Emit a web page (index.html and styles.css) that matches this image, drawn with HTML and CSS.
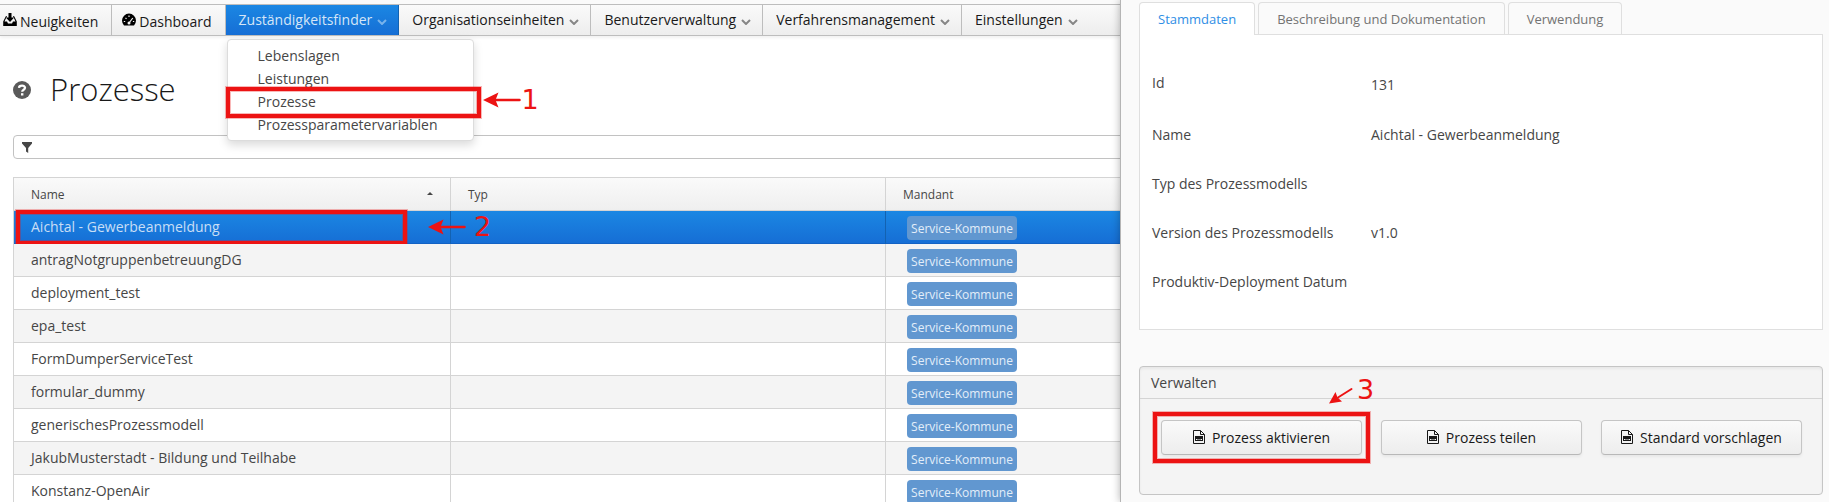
FILE: index.html
```html
<!DOCTYPE html>
<html lang="de">
<head>
<meta charset="utf-8">
<title>Prozesse</title>
<link rel="stylesheet" href="styles.css">
</head>
<body>
<svg class="defs" aria-hidden="true">
  <symbol id="chevron" viewBox="0 0 10 6"><path d="M1 1l4 4 4-4" fill="none" stroke="currentColor" stroke-width="2"/></symbol>
  <symbol id="file" viewBox="0 0 12 14"><path d="M.5.5h7l4 4v9H.5z M7.5.5v4h4" fill="none" stroke="currentColor"/><path d="M2 6h8v5H2z" fill="currentColor"/><path d="M3 9.500h1.500M5.500 9.500h1M7.500 9.500h1.500" stroke="#f8f8f8"/></symbol>
  <symbol id="arrow" viewBox="0 0 38 16"><path d="M12 8h24.500" stroke="currentColor" stroke-width="2.500" stroke-linecap="round"/><path d="M0 8L15.500.5 12.500 8l3 7.500z" fill="currentColor"/></symbol>
</svg>
<div class="app">
  <main class="main">
    <nav class="menubar">
      <a class="menu-item menu-link" href="#"><svg class="icon-inbox" viewBox="0 0 14 14"><path d="M5.500 0h3v4.500h2.700L7 9 2.800 4.500h2.700z"/><path d="M3 3L.2 8.500V13h13.600V8.500L11 3h-1l2.500 5.500H10L9 10.500H5L4 8.500H1.500L4 3z"/></svg>Neuigkeiten</a>
      <a class="menu-item menu-link dashboard" href="#"><svg class="icon-gauge" viewBox="0 0 14 12"><path d="M2 11.500A7 7 0 1 1 12 11.500z"/><path d="M7 9l3.800-5M1.800 7.500h1.400M3.500 3.800l1 1M7 1.600V3M10.900 7.500h1.300" stroke="#f4f4f4" stroke-width="1.200" fill="none"/><circle cx="7" cy="9" r="1.500" fill="#f4f4f4"/></svg>Dashboard</a>
      <div class="menu-group">
        <button class="menu-item active" type="button">Zuständigkeitsfinder<svg class="chevron"><use href="#chevron"/></svg></button>
        <ul class="dropdown">
          <li><a href="#">Lebenslagen</a></li>
          <li><a href="#">Leistungen</a></li>
          <li class="marked"><a href="#">Prozesse</a>
            <span class="mark mark-menu"></span>
            <span class="step step-one"><svg class="arrow"><use href="#arrow"/></svg>1</span></li>
          <li><a href="#">Prozessparametervariablen</a></li>
        </ul>
      </div>
      <button class="menu-item" type="button">Organisationseinheiten<svg class="chevron"><use href="#chevron"/></svg></button>
      <button class="menu-item" type="button">Benutzerverwaltung<svg class="chevron"><use href="#chevron"/></svg></button>
      <button class="menu-item" type="button">Verfahrensmanagement<svg class="chevron"><use href="#chevron"/></svg></button>
      <button class="menu-item last" type="button">Einstellungen<svg class="chevron"><use href="#chevron"/></svg></button>
    </nav>
    <header class="title">
      <svg class="help" viewBox="0 0 18 18"><circle cx="9" cy="9" r="9" fill="#5a5a5a"/><path d="M6 6.800C6.200 3.800 12 3.800 12 6.800 12 8.800 9.200 8.600 9.200 10.800" fill="none" stroke="#fff" stroke-width="2.300"/><path d="M8 12.200h2.400v2.300H8z" fill="#fff"/></svg>
      <h1>Prozesse</h1>
    </header>
    <label class="filter">
      <svg class="funnel" viewBox="0 0 10 11"><path d="M0 0h10v1.500L6.200 6v5L4 9.500V6L0 1.500z"/></svg>
      <input type="text" aria-label="Filter">
    </label>
    <table class="grid">
      <colgroup><col class="col-name"><col class="col-typ"><col></colgroup>
      <thead><tr><th><span class="sorted">Name<svg class="sort" viewBox="0 0 6 3"><path d="M0 3l3-3 3 3z"/></svg></span></th><th>Typ</th><th>Mandant</th></tr></thead>
      <tbody>
        <tr class="selected"><td>Aichtal - Gewerbeanmeldung<span class="mark mark-row"></span></td><td><span class="step step-two"><svg class="arrow"><use href="#arrow"/></svg>2</span></td><td><span class="tag">Service-Kommune</span></td></tr>
        <tr><td>antragNotgruppenbetreuungDG</td><td></td><td><span class="tag">Service-Kommune</span></td></tr>
        <tr><td>deployment_test</td><td></td><td><span class="tag">Service-Kommune</span></td></tr>
        <tr><td>epa_test</td><td></td><td><span class="tag">Service-Kommune</span></td></tr>
        <tr><td>FormDumperServiceTest</td><td></td><td><span class="tag">Service-Kommune</span></td></tr>
        <tr><td>formular_dummy</td><td></td><td><span class="tag">Service-Kommune</span></td></tr>
        <tr><td>generischesProzessmodell</td><td></td><td><span class="tag">Service-Kommune</span></td></tr>
        <tr><td>JakubMusterstadt - Bildung und Teilhabe</td><td></td><td><span class="tag">Service-Kommune</span></td></tr>
        <tr><td>Konstanz-OpenAir</td><td></td><td><span class="tag">Service-Kommune</span></td></tr>
      </tbody>
    </table>
  </main>
  <aside class="detail">
    <div class="tabs" role="tablist">
      <button class="tab current" type="button" role="tab" aria-selected="true">Stammdaten</button>
      <button class="tab" type="button" role="tab">Beschreibung und Dokumentation</button>
      <button class="tab" type="button" role="tab">Verwendung</button>
    </div>
    <dl class="sheet">
      <dt>Id</dt><dd class="id-value">131</dd>
      <dt>Name</dt><dd>Aichtal - Gewerbeanmeldung</dd>
      <dt>Typ des Prozessmodells</dt><dd></dd>
      <dt>Version des Prozessmodells</dt><dd>v1.0</dd>
      <dt>Produktiv-Deployment Datum</dt><dd></dd>
    </dl>
    <section class="manage">
      <h2>Verwalten</h2>
      <div class="actions">
        <div class="action">
          <button class="button" type="button"><svg class="file"><use href="#file"/></svg>Prozess aktivieren</button>
          <span class="mark mark-button"></span>
          <span class="step step-three"><svg class="arrow-down" viewBox="0 0 24 18"><path d="M22.500 2L9 10.500" stroke="currentColor" stroke-width="2" stroke-linecap="round"/><path d="M0 16.500L6.500 5l2 5.500 4.500 4z" fill="currentColor"/></svg>3</span>
        </div>
        <div class="action"><button class="button" type="button"><svg class="file"><use href="#file"/></svg>Prozess teilen</button></div>
        <div class="action"><button class="button" type="button"><svg class="file"><use href="#file"/></svg>Standard vorschlagen</button></div>
      </div>
    </section>
  </aside>
</div>
</body>
</html>
```

FILE: styles.css
```css
* { box-sizing: border-box; }
body { margin: 0; font-family: "Open Sans", sans-serif; font-size: 14px; line-height: 20px; color: #464646; background: #fff; }
button, input { font: inherit; color: inherit; }
a { color: inherit; text-decoration: none; }
.defs { display: none; }
.app { display: grid; grid-template-columns: minmax(0, 1120fr) minmax(0, 709fr); height: 100vh; overflow: hidden; }
.main { overflow: hidden; }

.menubar { display: flex; height: 32px; margin-top: 4px; border-top: 1px solid #bdbdbd; border-bottom: 1px solid #bdbdbd; background: linear-gradient(#fafafa, #ededed); box-shadow: 0 -4px 0 #fafafa, 0 2px 3px rgba(0, 0, 0, .06); color: #191919; }
.menu-item { display: flex; align-items: center; height: 30px; padding: 0 11px 0 13px; border: 0; border-right: 1px solid #bdbdbd; background: none; white-space: nowrap; }
.menu-link { padding: 4px 13px 0 3px; gap: 3px; }
.menu-link.dashboard { padding-left: 10px; }
.menu-item.last { border-right: 0; }
.menu-item.active { border-right-color: #1362b1; background: linear-gradient(#1b87e3, #166ed5); color: #d5e6f7; }
.chevron { width: 10px; height: 6px; margin: 3px 0 0 5px; color: #868686; }
.active .chevron { color: #78b3ec; }
.icon-inbox, .icon-gauge { width: 14px; height: 14px; margin-bottom: 4px; }
.menu-group { position: relative; }
.dropdown { position: absolute; z-index: 2; top: 34px; left: 1px; width: 247px; margin: 0; padding: 4px 0; border: 1px solid #dcdcdc; border-radius: 4px; background: #fff; box-shadow: 0 4px 10px rgba(0, 0, 0, .15); list-style: none; color: #464646; }
.dropdown li { position: relative; height: 23px; padding-left: 30px; line-height: 23px; white-space: nowrap; }
.dropdown li.marked { z-index: 1; }

.mark { position: absolute; border: 4px solid #ec1313; box-shadow: 0 0 0 1px rgba(236, 19, 19, .3), inset 0 0 0 1px rgba(236, 19, 19, .3); pointer-events: none; }
.mark-menu { top: -3px; left: -2px; width: 255px; height: 31px; }
.mark-row { top: -1px; left: 2px; width: 391px; height: 35px; }
.mark-button { inset: -8px; }
.step { position: absolute; display: flex; align-items: center; gap: 4px; font-family: "DejaVu Sans", sans-serif; font-size: 27px; line-height: 28px; color: #ec1313; pointer-events: none; }
.step-one { top: -4px; left: 255px; gap: 1px; }
.step-two { top: 2px; left: -23px; gap: 8px; }
.step-three { top: -45px; left: 168px; }
.arrow { width: 38px; height: 16px; }
.arrow-down { width: 24px; height: 18px; margin-top: 12px; }

.title { display: flex; align-items: center; gap: 19px; padding: 31px 13px 23px; }
.help { width: 18px; height: 18px; }
h1 { margin: 0; font-size: 31px; font-weight: 300; line-height: 45px; color: #191919; }
.filter { display: flex; align-items: center; height: 24px; margin: 0 -4px 18px 13px; padding-left: 8px; border: 1px solid #c2c2c2; border-radius: 4px; }
.funnel { width: 10px; height: 11px; fill: #464646; }
.filter input { flex: 1; border: 0; outline: 0; background: none; }

.grid { width: calc(100% - 13px); margin-left: 13px; border-collapse: separate; border-spacing: 0; border-left: 1px solid #d4d4d4; table-layout: fixed; }
.col-name { width: 437px; }
.col-typ { width: 435px; }
.grid th { height: 34px; padding: 1px 16px 0 17px; border-top: 1px solid #d4d4d4; border-bottom: 1px solid #d4d4d4; border-right: 1px solid #d4d4d4; background: linear-gradient(#fafafa, #efefef); font-size: 12px; font-weight: 400; text-align: left; }
.grid td { position: relative; height: 33px; padding: 0 16px 0 17px; border-right: 1px solid #d4d4d4; border-bottom: 1px solid #d4d4d4; white-space: nowrap; }
.grid th:last-child, .grid td:last-child { border-right: 0; }
.grid tr:nth-child(even) td { background: #f4f4f4; }
.grid .selected td { border-right-color: #1362b1; border-bottom-color: #1362c4; background: linear-gradient(#1b87e3, #166ed5); color: #c8def5; }
.sorted { display: flex; justify-content: space-between; }
.sort { width: 6px; height: 3px; margin: 7px 1px 0 0; fill: #464646; }
.grid td:last-child { padding: 2px 21px 0; }
.tag { display: block; width: 110px; height: 24px; border-radius: 4px; background: #6197d0; color: #e3eef9; font-size: 12px; line-height: 25px; text-align: center; }

.detail { z-index: 3; padding: 2px 6px 0 18px; border-left: 1px solid #b5b5b5; background: #fafafa; box-shadow: 0 0 8px rgba(0, 0, 0, .3); }
.tabs { position: relative; display: flex; gap: 3px; height: 33px; margin-bottom: -1px; }
.tab { height: 32px; padding: 0 18px; border: 1px solid #dfdfdf; border-bottom: 0; border-radius: 4px 4px 0 0; background: #fafafa; font-size: 13px; color: #737373; white-space: nowrap; }
.tab.current { height: 33px; background: #fff; color: #2f8ee5; }
.sheet { display: grid; grid-template-columns: 219px 1fr; grid-template-rows: 55px; grid-auto-rows: 49px; align-items: center; margin: 0 0 36px; padding: 20px 12px 23px; border: 1px solid #dfdfdf; background: #fff; }
.sheet dd { margin: 0; }
.sheet .id-value { padding-top: 4px; }
.manage { border: 1px solid #c5c5c5; border-radius: 4px; background: #f4f4f4; box-shadow: inset 0 2px 3px rgba(0, 0, 0, .05); }
h2 { margin: 0; padding: 6px 11px 5px; border-bottom: 1px solid #d4d4d4; font-size: 14px; font-weight: 400; line-height: 20px; }
.actions { display: grid; grid-template-columns: repeat(3, 1fr); gap: 19px; padding: 21px 20px 39px 21px; }
.action { position: relative; }
.button { display: flex; align-items: center; justify-content: center; gap: 7px; width: 100%; height: 35px; padding: 0; border: 1px solid #c5c5c5; border-bottom-color: #b8b8b8; border-radius: 4px; background: linear-gradient(#fafafa, #ededed); box-shadow: 0 2px 3px rgba(0, 0, 0, .05); color: #191919; white-space: nowrap; }
.file { width: 12px; height: 14px; margin-bottom: 2px; }
```
